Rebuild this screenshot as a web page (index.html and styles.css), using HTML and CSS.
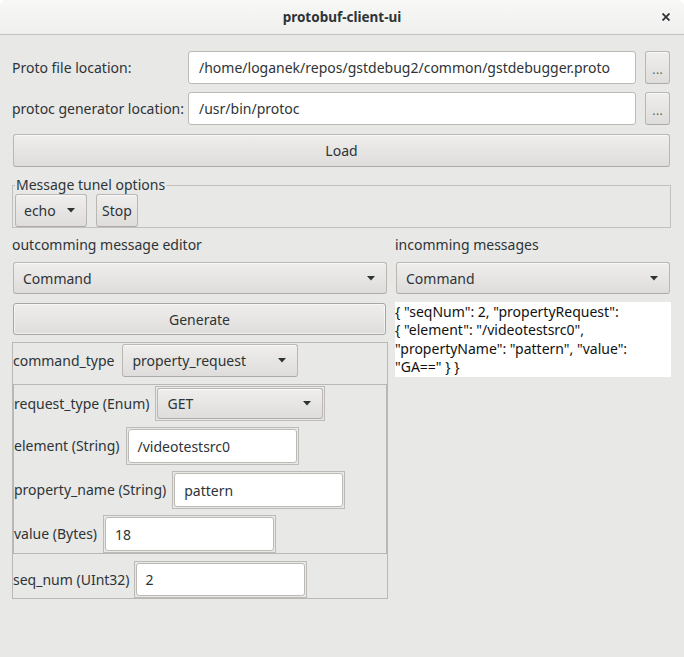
FILE: index.html
```html
<!DOCTYPE html>
<html>
<head>
<meta charset="utf-8">
<title>protobuf-client-ui</title>
<link rel="stylesheet" href="styles.css">
</head>
<body>
<div class="window">
  <header class="titlebar">
    <span></span>
    <span class="title">protobuf-client-ui</span>
    <span class="close"><svg width="8" height="8" viewBox="0 0 8 8"><path d="M0.5 0.5L7.5 7.5M7.5 0.5L0.5 7.5" stroke="#2e3436" stroke-width="1.8" fill="none"/></svg></span>
  </header>
  <main class="content">
    <div class="files">
      <span class="label">Proto file location:</span>
      <div class="entry file-entry">/home/loganek/repos/gstdebug2/common/gstdebugger.proto</div>
      <div class="btn dots">...</div>
      <span class="label">protoc generator location:</span>
      <div class="entry file-entry">/usr/bin/protoc</div>
      <div class="btn dots">...</div>
    </div>
    <div class="btn load">Load</div>
    <fieldset class="tunnel">
      <legend>Message tunel options</legend>
      <div class="tunnel-row">
        <div class="btn combo echo"><span>echo</span><svg class="arrow" width="8" height="5" viewBox="0 0 8 5"><path d="M0 0H8L4 4.5Z" fill="#2e3436"/></svg></div>
        <div class="btn stop">Stop</div>
      </div>
    </fieldset>
    <div class="panes">
      <section class="pane">
        <div class="pane-label">outcomming message editor</div>
        <div class="btn combo wide"><span>Command</span><svg class="arrow" width="8" height="5" viewBox="0 0 8 5"><path d="M0 0H8L4 4.5Z" fill="#2e3436"/></svg></div>
        <div class="btn generate">Generate</div>
        <div class="editor">
          <div class="field-row top-row">
            <span class="flabel">command_type</span>
            <div class="btn combo ctype"><span>property_request</span><svg class="arrow" width="8" height="5" viewBox="0 0 8 5"><path d="M0 0H8L4 4.5Z" fill="#2e3436"/></svg></div>
          </div>
          <div class="nested">
            <div class="field-row">
              <span class="flabel">request_type (Enum)</span>
              <div class="vframe rframe"><div class="btn combo inner-combo"><span>GET</span><svg class="arrow" width="8" height="5" viewBox="0 0 8 5"><path d="M0 0H8L4 4.5Z" fill="#2e3436"/></svg></div></div>
            </div>
            <div class="field-row">
              <span class="flabel">element (String)</span>
              <div class="vframe"><div class="entry">/videotestsrc0</div></div>
            </div>
            <div class="field-row">
              <span class="flabel">property_name (String)</span>
              <div class="vframe"><div class="entry">pattern</div></div>
            </div>
            <div class="field-row">
              <span class="flabel">value (Bytes)</span>
              <div class="vframe"><div class="entry">18</div></div>
            </div>
          </div>
          <div class="field-row seq-row">
            <span class="flabel">seq_num (UInt32)</span>
            <div class="vframe seqframe"><div class="entry">2</div></div>
          </div>
        </div>
      </section>
      <section class="pane">
        <div class="pane-label">incomming messages</div>
        <div class="btn combo wide right-combo"><span>Command</span><svg class="arrow" width="8" height="5" viewBox="0 0 8 5"><path d="M0 0H8L4 4.5Z" fill="#2e3436"/></svg></div>
        <div class="textview">{ "seqNum": 2, "propertyRequest":<br>{ "element": "/videotestsrc0",<br>"propertyName": "pattern", "value":<br>"GA==" } }</div>
      </section>
    </div>
  </main>
</div>
</body>
</html>
```
FILE: styles.css
```css
* { box-sizing: border-box; }

html, body {
  margin: 0;
  background: #ffffff;
}

body {
  font-family: "Noto Sans", sans-serif;
  font-size: 14px;
  color: #2e3436;
}

.window {
  width: 684px;
  height: 657px;
  background: #e8e8e7;
  border-radius: 7px 7px 0 0;
  overflow: hidden;
  display: flex;
  flex-direction: column;
}

.titlebar {
  flex: none;
  height: 35px;
  background: linear-gradient(#f8f8f7, #efefee);
  border-bottom: 1px solid #c2c1be;
  display: grid;
  grid-template-columns: 1fr auto 1fr;
  align-items: center;
}

.title {
  font-weight: bold;
  font-size: 13.5px;
  line-height: 18px;
  padding-bottom: 1px;
}

.close {
  justify-self: end;
  margin-right: 14px;
  display: flex;
  margin-bottom: 1px;
}

.content {
  padding: 16px 13px 0 12px;
  display: flex;
  flex-direction: column;
}

.files {
  display: grid;
  grid-template-columns: 176px 1fr 26px;
  row-gap: 8px;
  align-items: center;
}

.label {
  line-height: 18px;
}

.entry {
  background: #ffffff;
  border: 1px solid #bdbab5;
  border-radius: 3px;
  padding-left: 9px;
  display: flex;
  align-items: center;
  white-space: nowrap;
  overflow: hidden;
  height: 100%;
}

.file-entry {
  height: 33px;
  margin-right: 9px;
  padding-left: 10px;
}

.btn {
  border: 1px solid #bab7b2;
  border-bottom-color: #aeaba6;
  border-radius: 3px;
  background: linear-gradient(#efeeed, #dfdddb);
  box-shadow: inset 0 1px rgba(255, 255, 255, 0.7);
  display: flex;
  align-items: center;
  justify-content: center;
  white-space: nowrap;
}

.dots {
  height: 33px;
  width: 25px;
  font-size: 12px;
  color: #5d5f5b;
  padding-top: 4px;
  letter-spacing: 0.5px;
  text-indent: 0.5px;
}

.load {
  height: 33px;
  margin: 9px 1px 0;
}

.tunnel {
  margin: 9px 0 0;
  padding: 0 2px;
  border: 1px solid #c3c1bd;
  min-width: 0;
}

.tunnel legend {
  padding: 0 1px;
  line-height: 18px;
}

.tunnel-row {
  display: flex;
  gap: 9px;
  height: 33px;
}

.combo {
  justify-content: space-between;
  padding: 0 11px 0 9px;
}

.arrow {
  flex: none;
}

.echo {
  width: 72px;
  padding: 0 11px 0 8px;
}

.stop {
  width: 42px;
}

.panes {
  display: grid;
  grid-template-columns: 376px 276px;
  column-gap: 7px;
  margin-top: 8px;
}

.pane {
  display: flex;
  flex-direction: column;
}

.pane-label {
  line-height: 18px;
  margin-bottom: 8px;
}

.wide {
  height: 32px;
  margin: 0 1px;
  padding: 0 11px 0 9px;
}

.generate {
  height: 32px;
  margin: 9px 2px 0 1px;
  border-color: #a9a6a1;
  box-shadow: inset 0 0 0 1px rgba(255, 255, 255, 0.55);
}

.editor {
  margin-top: 7px;
  border: 1px solid #bab8b4;
  display: flex;
  flex-direction: column;
  gap: 7px;
}

.field-row {
  display: flex;
  align-items: center;
  gap: 6px;
}

.flabel {
  line-height: 18px;
  white-space: nowrap;
}

.top-row {
  padding-top: 1px;
  gap: 8px;
}

.ctype {
  height: 33px;
  width: 176px;
  padding: 0 11px 0 9px;
}

.nested {
  border: 1px solid #bab8b4;
  padding-top: 1px;
  display: flex;
  flex-direction: column;
  gap: 6px;
}

.vframe {
  width: 173px;
  height: 38px;
  border: 1px solid #bdbbb7;
  padding: 1px;
}

.rframe {
  width: 170px;
  height: 35px;
}

.inner-combo {
  height: 100%;
  padding: 0 11px 0 9px;
}

.seq-row {
  gap: 4px;
}

.seqframe {
  height: 37px;
}

.textview {
  margin-top: 8px;
  height: 75px;
  background: #ffffff;
  color: #111111;
  line-height: 18.3px;
  padding-top: 1px;
  white-space: nowrap;
}
```
